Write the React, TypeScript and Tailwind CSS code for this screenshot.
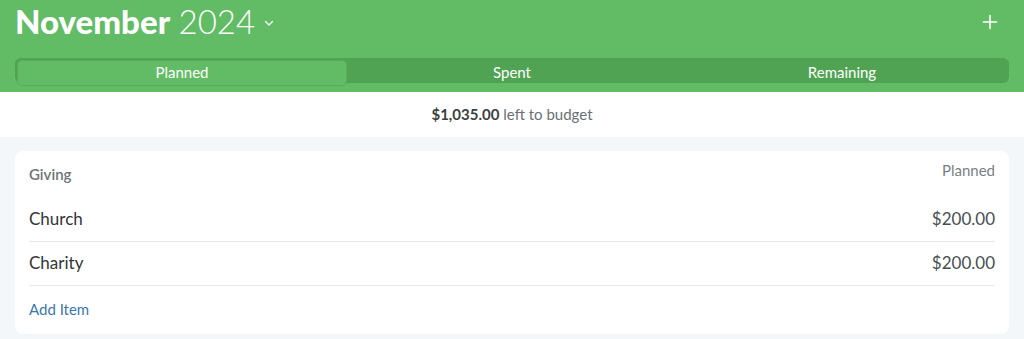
import React from 'react';

const font = { fontFamily: 'Lato, "Noto Sans", sans-serif' };

const Header = () => {
    return (
        <div className="bg-[#62bb65] px-[15px] pb-[9px]">
            <div className="flex h-[42px] items-center justify-between">
                <div className="flex items-center gap-[8px] text-white">
                    <p className="text-[33px] leading-none">
                        <span className="font-black">November</span>{' '}
                        <span className="font-light">2024</span>
                    </p>
                    <svg width="12" height="12" viewBox="0 0 12 12" className="mt-[4px]">
                        <path d="M2.5 4.5 L6 8 L9.5 4.5" stroke="white" strokeWidth="1.3" fill="none" strokeLinecap="round" strokeLinejoin="round" />
                    </svg>
                </div>
                <svg width="16" height="16" viewBox="0 0 16 16" className="mr-[11px] mt-[2px]">
                    <path d="M8 1.5 V14.5 M1.5 8 H14.5" stroke="white" strokeWidth="1.6" strokeLinecap="round" />
                </svg>
            </div>
            <div className="mt-[16px] grid h-[25px] grid-cols-3 rounded-[6px] bg-[#4fa352] p-[2px] text-[15px] text-white">
                <div className="flex items-center justify-center rounded-[5px] border border-[#58ad5b] bg-[#62bb65] pb-[1px]">Planned</div>
                <div className="flex items-center justify-center pb-[1px]">Spent</div>
                <div className="flex items-center justify-center pb-[1px]">Remaining</div>
            </div>
        </div>
    )
}

const Row = ({ name, amount }: { name: string; amount: string }) => {
    return (
        <div className="flex h-[44px] items-center justify-between border-b border-[#e8ebee] pb-[2px] text-[17px]">
            <p className="text-[#333638]">{name}</p>
            <p className="text-[#4a4e52]">{amount}</p>
        </div>
    )
}

export default function App() {
    return (
        <div style={font} className="h-[339px] w-[1024px] overflow-hidden bg-[#f4f7fa]">
            <Header />
            <div className="flex h-[45px] items-center justify-center bg-white text-[15px] text-[#6b7075]">
                <span className="font-bold text-[#3b3f42]">$1,035.00</span>&nbsp;left to budget
            </div>
            <div className="px-[15px] pt-[14px]">
                <div className="rounded-[8px] bg-white px-[14px]">
                    <div className="flex h-[47px] items-center justify-between text-[15px]">
                        <p className="font-semibold text-[#6d7378]">Giving</p>
                        <p className="-mt-[8px] text-[#7a7f84]">Planned</p>
                    </div>
                    <Row name="Church" amount="$200.00" />
                    <Row name="Charity" amount="$200.00" />
                    <div className="flex h-[48px] items-center pb-[2px] text-[15px] text-[#3a78b0]">Add Item</div>
                </div>
            </div>
        </div>
    )
}
